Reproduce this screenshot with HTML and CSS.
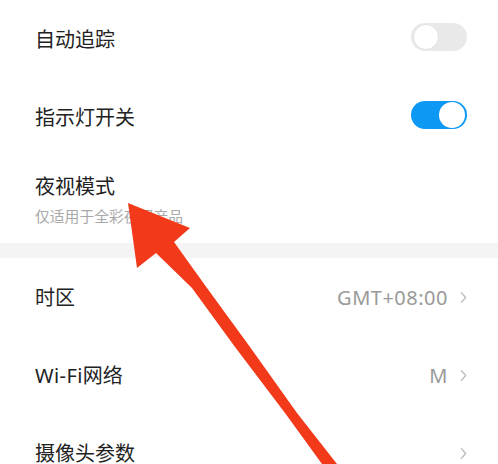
FILE: index.html
```html
<!DOCTYPE html>
<html lang="zh-CN">
<head>
<meta charset="utf-8">
<link rel="stylesheet" href="styles.css">
</head>
<body>
<div class="page">
  <div class="group">
    <div class="row">
      <span class="label">自动追踪</span>
      <span class="switch off"><span class="knob"></span></span>
    </div>
    <div class="row">
      <span class="label">指示灯开关</span>
      <span class="switch on"><span class="knob"></span></span>
    </div>
    <div class="row tall">
      <div class="texts">
        <div class="label">夜视模式</div>
        <div class="sub">仅适用于全彩夜视产品</div>
      </div>
    </div>
  </div>
  <div class="gap"></div>
  <div class="group">
    <div class="row">
      <span class="label">时区</span>
      <span class="value">GMT+08:00<svg class="chev" viewBox="0 0 8 14"><path d="M1.5 1.5 L6.5 7 L1.5 12.5"/></svg></span>
    </div>
    <div class="row">
      <span class="label"><span class="latin">Wi-Fi</span>网络</span>
      <span class="value">M<svg class="chev" viewBox="0 0 8 14"><path d="M1.5 1.5 L6.5 7 L1.5 12.5"/></svg></span>
    </div>
    <div class="row">
      <span class="label">摄像头参数</span>
      <span class="value"><svg class="chev" viewBox="0 0 8 14"><path d="M1.5 1.5 L6.5 7 L1.5 12.5"/></svg></span>
    </div>
  </div>
  <svg class="arrow" viewBox="0 0 498 464" width="498" height="464">
    <polygon points="128,203 190,228 174,242 207,288 250,347 297,413 337,464 322,464 285,413 235,347 192,288 156,253 137,268"/>
  </svg>
</div>
</body>
</html>
```

FILE: styles.css
```css
html, body {
  margin: 0;
  padding: 0;
  background: #ffffff;
}
body {
  font-family: "Noto Sans CJK SC", "Noto Sans", sans-serif;
  color: #222222;
  width: 498px;
  height: 464px;
  overflow: hidden;
}
.page {
  position: relative;
  width: 498px;
  height: 464px;
  overflow: hidden;
}
.group {
  display: flex;
  flex-direction: column;
}
.row {
  height: 78px;
  display: flex;
  align-items: center;
  justify-content: space-between;
  padding: 0 31px 0 35px;
  box-sizing: border-box;
}
.row.tall {
  height: 87px;
  align-items: flex-start;
  padding-top: 16px;
}
.label {
  font-size: 20px;
  line-height: 28px;
  color: #222222;
}
.latin {
  font-family: "Noto Sans", sans-serif;
  letter-spacing: 0.4px;
}
.sub {
  margin-top: 6px;
  font-size: 14.8px;
  line-height: 20px;
  color: #a8a8a8;
}
.gap {
  height: 15px;
  background: #f4f4f4;
}
.switch {
  position: relative;
  width: 56px;
  height: 28px;
  border-radius: 14px;
  margin-bottom: 5px;
  box-sizing: border-box;
  flex: none;
}
.switch.off {
  background: #e9e9e9;
}
.switch.on {
  background: #0d98f3;
}
.knob {
  position: absolute;
  top: 1px;
  width: 26px;
  height: 26px;
  border-radius: 50%;
  background: #ffffff;
  box-sizing: border-box;
}
.switch.off .knob {
  left: 2px;
  border: 1.5px solid #e2e2e2;
}
.switch.on .knob {
  right: 2px;
}
.value {
  display: flex;
  align-items: center;
  gap: 12px;
  font-size: 20px;
  letter-spacing: 0.5px;
  color: #9a9a9a;
  font-family: "Noto Sans", "Noto Sans CJK SC", sans-serif;
}
.chev {
  width: 7px;
  height: 13px;
  fill: none;
  stroke: #b8b8b8;
  stroke-width: 1.4;
  stroke-linecap: round;
  stroke-linejoin: round;
}
.arrow {
  position: absolute;
  left: 0;
  top: 0;
  pointer-events: none;
}
.arrow polygon {
  fill: #f23a1b;
}
```
